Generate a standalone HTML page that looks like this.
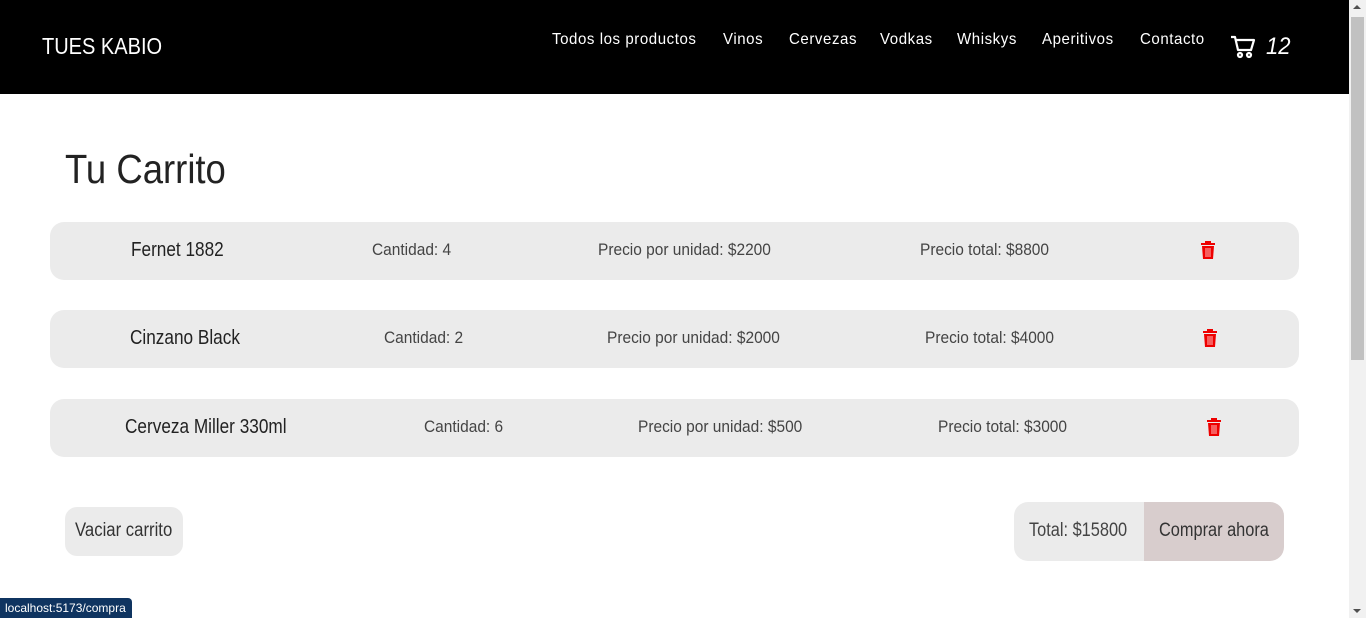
<!DOCTYPE html>
<html><head><meta charset="utf-8"><style>
*{margin:0;padding:0;box-sizing:border-box}
body{width:1366px;height:618px;overflow:hidden;background:#fff;font-family:"Liberation Sans",sans-serif;color:#333;position:relative}
.a{position:absolute;white-space:nowrap;transform-origin:0 0}
header{position:absolute;left:0;top:0;width:1349px;height:94px;background:#000;color:#fff}
.nav{font-size:16px;top:31px;letter-spacing:.6px;transform:scaleX(.94)}
.row{position:absolute;left:50px;width:1249px;height:58px;background:#ebebeb;border-radius:14px}
.row .a{top:18px;font-size:17px;color:#444;transform:scaleX(.91)}
.row .a.n{font-size:20px;color:#222;top:17px;transform:scaleX(.86)}
.row svg.a{transform:none}
.sb{position:absolute;right:0;top:0;width:17px;height:618px;background:#f1f1f1}
</style></head><body>
<header>
<div class="a" style="left:42px;top:33px;font-size:23px;transform:scaleX(.87)">TUES KABIO</div>
<div class="a nav" style="left:552px">Todos los productos</div>
<div class="a nav" style="left:723px">Vinos</div>
<div class="a nav" style="left:789px">Cervezas</div>
<div class="a nav" style="left:880px">Vodkas</div>
<div class="a nav" style="left:957px">Whiskys</div>
<div class="a nav" style="left:1042px">Aperitivos</div>
<div class="a nav" style="left:1140px">Contacto</div>
<svg class="a" style="left:1230px;top:34px" width="26" height="26" viewBox="0 0 26 26" fill="none" stroke="#fff" stroke-width="2.2" stroke-linejoin="round"><path d="M1 3h4l3 13h13l3-10H6"/><circle cx="10" cy="21" r="2"/><circle cx="19" cy="21" r="2"/></svg>
<div class="a" style="left:1266px;top:33px;font-size:24px;font-style:italic;transform:scaleX(.92)">12</div>
</header>
<div class="a" style="left:65px;top:146px;font-size:41px;color:#222;transform:scaleX(.89)">Tu Carrito</div>

<div class="row" style="top:222px">
<div class="a n" style="left:81px">Fernet 1882</div>
<div class="a" style="left:322px">Cantidad: 4</div>
<div class="a" style="left:548px">Precio por unidad: $2200</div>
<div class="a" style="left:870px">Precio total: $8800</div>
<svg class="a" style="left:1150px;top:18px" width="16" height="20" viewBox="0 0 16 20"><path d="M5 1h6v2h4v2H1V3h4z" fill="#e00"/><path d="M2 6h12l-1 13H3z" fill="#e00"/><path d="M6 8v9M8 8v9M10 8v9" stroke="#ffbbbb" stroke-width="1"/></svg>
</div>
<div class="row" style="top:310px">
<div class="a n" style="left:80px">Cinzano Black</div>
<div class="a" style="left:334px">Cantidad: 2</div>
<div class="a" style="left:557px">Precio por unidad: $2000</div>
<div class="a" style="left:875px">Precio total: $4000</div>
<svg class="a" style="left:1152px;top:18px" width="16" height="20" viewBox="0 0 16 20"><path d="M5 1h6v2h4v2H1V3h4z" fill="#e00"/><path d="M2 6h12l-1 13H3z" fill="#e00"/><path d="M6 8v9M8 8v9M10 8v9" stroke="#ffbbbb" stroke-width="1"/></svg>
</div>
<div class="row" style="top:399px">
<div class="a n" style="left:75px">Cerveza Miller 330ml</div>
<div class="a" style="left:374px">Cantidad: 6</div>
<div class="a" style="left:588px">Precio por unidad: $500</div>
<div class="a" style="left:888px">Precio total: $3000</div>
<svg class="a" style="left:1156px;top:18px" width="16" height="20" viewBox="0 0 16 20"><path d="M5 1h6v2h4v2H1V3h4z" fill="#e00"/><path d="M2 6h12l-1 13H3z" fill="#e00"/><path d="M6 8v9M8 8v9M10 8v9" stroke="#ffbbbb" stroke-width="1"/></svg>
</div>

<div class="a" style="left:65px;top:507px;width:118px;height:49px;background:#ebebeb;border-radius:12px"></div>
<div class="a" style="left:75px;top:520px;font-size:19px;color:#333;transform:scaleX(.88)">Vaciar carrito</div>
<div class="a" style="left:1014px;top:502px;width:130px;height:59px;border-top-left-radius:14px;border-bottom-left-radius:14px;background:#ebebeb"></div>
<div class="a" style="left:1144px;top:502px;width:140px;height:59px;border-top-right-radius:14px;border-bottom-right-radius:14px;background:#d8cdcd"></div>
<div class="a" style="left:1029px;top:520px;font-size:19px;color:#444;transform:scaleX(.86)">Total: $15800</div>
<div class="a" style="left:1159px;top:520px;font-size:19px;color:#333;transform:scaleX(.86)">Comprar ahora</div>
<div class="a" style="left:0;top:598px;height:20px;width:132px;padding:0 5px;background:#0f3460;color:#fff;font-size:12px;line-height:20px;border-top-right-radius:4px">localhost:5173/compra</div>
<div class="sb"><div style="position:absolute;left:2px;top:17px;width:13px;height:343px;background:#c1c1c1"></div>
<div style="position:absolute;left:4px;bottom:5px;border:4px solid transparent;border-top:4px solid #505050;border-bottom:0"></div>
<div style="position:absolute;left:4px;top:5px;border:4px solid transparent;border-bottom:4px solid #505050;border-top:0"></div></div>
</body></html>
